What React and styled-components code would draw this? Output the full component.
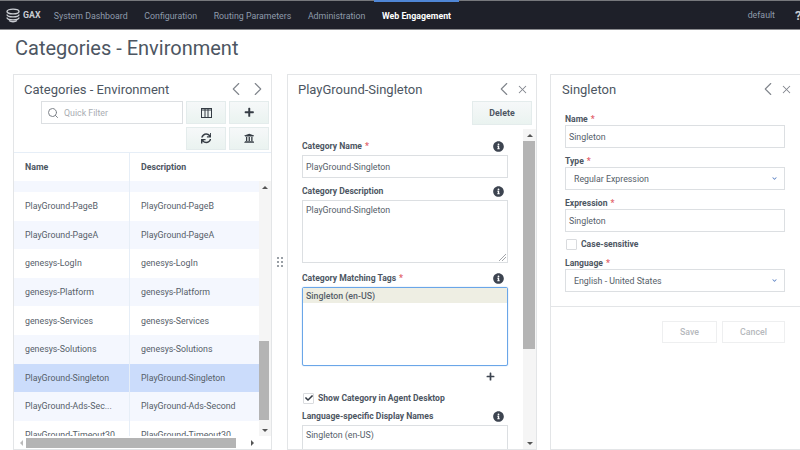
import React from 'react';
import styled, { createGlobalStyle } from 'styled-components';
import { ChevronLeft, ChevronRight, X, Search } from 'lucide-react';
import { FaPlus, FaSync, FaUniversity, FaInfoCircle, FaCheck, FaChevronDown } from 'react-icons/fa';

const GlobalStyle = createGlobalStyle`
  html, body { margin: 0; padding: 0; background: #fff; }
  body { font-family: Roboto, "Liberation Sans", sans-serif; color: #4d5662; overflow: hidden; }
  * { box-sizing: border-box; }
`;

const Page = styled.div`
  width: 800px;
  height: 450px;
  display: flex;
  flex-direction: column;
  overflow: hidden;
`;

const Nav = styled.nav`
  height: 30px;
  flex: none;
  display: flex;
  align-items: stretch;
  background: #1e2029;
  border-top: 1px solid #77787c;
  border-bottom: 1px solid #8a8b8e;
  font-size: 8.8px;
`;

const Brand = styled.div`
  display: flex;
  align-items: center;
  width: 45.5px;
  padding-left: 5px;
  gap: 2px;
  color: #c9ccd2;
  font-weight: 700;
`;

const NavItem = styled.div`
  display: flex;
  align-items: center;
  margin-top: -1px;
  padding: 0 8.3px;
  color: ${(p) => (p.$active ? '#fff' : '#8e9bab')};
  font-weight: ${(p) => (p.$active ? 700 : 400)};
  border-top: 2px solid ${(p) => (p.$active ? '#4f86d6' : 'transparent')};
`;

const NavRight = styled.div`
  margin-left: auto;
  display: flex;
  align-items: center;
  color: #8e9bab;
`;

const HelpMark = styled.span`
  margin-left: 20px;
  margin-right: -3px;
  width: 8px;
  color: #c9ccd2;
  font-size: 13px;
  font-weight: 700;
`;

const PageTitle = styled.h1`
  margin: 0;
  height: 44px;
  padding: 6px 0 0 15px;
  font-size: 20px;
  line-height: 24px;
  font-weight: 400;
  color: #4d5662;
  flex: none;
`;

const Panels = styled.div`
  flex: 1;
  min-height: 0;
  display: flex;
  padding-left: 13px;
`;

const Panel = styled.section`
  width: ${(p) => p.$width}px;
  margin-right: ${(p) => p.$gap || 0}px;
  flex: none;
  display: flex;
  flex-direction: column;
  height: 376px;
  border: 1px solid #e3e5e7;
  overflow: hidden;
`;

const Grip = styled.div`
  width: 15px;
  flex: none;
  display: grid;
  grid-template-columns: 2px 2px;
  gap: 2px;
  align-content: center;
  justify-content: center;
  i {
    width: 2px;
    height: 2px;
    background: #9aa0a6;
  }
`;

const PanelHead = styled.div`
  height: 26px;
  flex: none;
  display: flex;
  align-items: center;
  padding: 2px 0 0 ${(p) => p.$left}px;
  font-size: 13px;
  color: #4d5662;
`;

const HeadIcons = styled.div`
  margin-left: auto;
  display: flex;
  align-items: center;
  gap: ${(p) => p.$gap}px;
  margin-right: ${(p) => p.$right}px;
  color: #80858c;
`;

const Toolbar = styled.div`
  display: grid;
  grid-template-columns: 142px 40px 40px;
  grid-auto-rows: 23px;
  gap: 3px;
  padding-left: 27px;
  height: 51px;
  flex: none;
`;

const FilterBox = styled.div`
  display: flex;
  align-items: center;
  gap: 5px;
  padding-left: 5px;
  border: 1px solid #dcdfe2;
  font-size: 8.8px;
  color: #a9adb2;
  svg { color: #7d8289; }
`;

const ToolButton = styled.button`
  grid-column: ${(p) => p.$col || 'auto'};
  display: flex;
  align-items: center;
  justify-content: center;
  padding: 0;
  border: 1px solid #e4ecec;
  background: linear-gradient(#f6f8f9, #eaf3f0);
  color: #353c44;
  font-size: 10.5px;
`;

const TableWrap = styled.div`
  flex: 1;
  min-height: 0;
  display: flex;
  flex-direction: column;
`;

const HeaderRow = styled.div`
  height: 29px;
  flex: none;
  display: grid;
  grid-template-columns: 115px 1fr;
  border-top: 1px solid #e6eef7;
  font-size: 8.8px;
  font-weight: 700;
  color: #4d5662;
  background: #fff;
`;

const HeaderCell = styled.div`
  display: flex;
  align-items: center;
  padding: 0 0 1px 11px;
  & + & { border-left: 1px solid #e6eef7; }
`;

const TableMiddle = styled.div`
  flex: 1;
  min-height: 0;
  display: flex;
`;

const Rows = styled.div`
  flex: 1;
  min-width: 0;
  overflow: hidden;
`;

const Row = styled.div`
  height: ${(p) => p.$height || 28.6}px;
  display: grid;
  grid-template-columns: 115px 1fr;
  font-size: 8.8px;
  color: #565e69;
  background: ${(p) => (p.$selected ? '#cbdcfb' : p.$alt ? '#f4f7fe' : '#fff')};
`;

const Cell = styled.div`
  display: flex;
  align-items: center;
  padding-left: 11px;
  white-space: nowrap;
  & + & { border-left: 1px solid #e6eef7; }
`;

const VScroll = styled.div`
  width: ${(p) => p.$width}px;
  flex: none;
  display: flex;
  flex-direction: column;
  background: #f5f5f5;
`;

const ArrowBox = styled.div`
  height: 12px;
  flex: none;
  display: flex;
  align-items: center;
  justify-content: center;
  &::after {
    content: '';
    border-left: 3px solid transparent;
    border-right: 3px solid transparent;
    ${(p) => (p.$down ? 'border-top: 3px solid #555;' : 'border-bottom: 3px solid #555;')}
  }
`;

const VTrack = styled.div`
  flex: 1;
  min-height: 0;
  display: flex;
  flex-direction: column;
`;

const VThumb = styled.div`
  height: ${(p) => p.$height}px;
  margin-top: ${(p) => p.$top}px;
  margin-right: ${(p) => p.$inset || 0}px;
  background: #b4b4b4;
  flex: none;
`;

const HScroll = styled.div`
  height: 13px;
  flex: none;
  display: flex;
  align-items: center;
  background: #fff;
  padding: 0 2px;
  margin-right: 12px;
`;

const HArrow = styled.div`
  width: 10px;
  flex: none;
  display: flex;
  justify-content: center;
  margin-left: ${(p) => (p.$right ? 'auto' : '0')};
  &::after {
    content: '';
    border-top: 3px solid transparent;
    border-bottom: 3px solid transparent;
    ${(p) => (p.$right ? 'border-left: 3px solid #555;' : 'border-right: 3px solid #bbb;')}
  }
`;

const HThumb = styled.div`
  width: 210px;
  height: 10px;
  background: #b4b4b4;
`;

const ActionBar = styled.div`
  height: 28px;
  flex: none;
  display: flex;
  justify-content: flex-end;
  padding-right: 4px;
`;

const DeleteButton = styled.button`
  width: 60px;
  height: 24px;
  padding: 0;
  border: 1px solid #e4ecec;
  background: linear-gradient(#f6f8f9, #eaf3f0);
  font: 700 8.8px Roboto, sans-serif;
  color: #4d5662;
`;

const ScrollBody = styled.div`
  flex: 1;
  min-height: 0;
  display: flex;
`;

const FormColumn = styled.div`
  flex: 1;
  min-width: 0;
  overflow: hidden;
  padding: 9px 15px 0 14px;
`;

const LabelRow = styled.div`
  height: 16px;
  margin-top: ${(p) => p.$top || 0}px;
  margin-bottom: 1px;
  display: flex;
  align-items: center;
  justify-content: space-between;
  font-size: 8.6px;
  font-weight: 700;
  color: #4d5662;
  svg { color: #3d4450; font-size: 11px; margin-right: 4px; }
`;

const Required = styled.span`
  color: #e2626b;
  margin-left: 3px;
`;

const TextBox = styled.div`
  height: ${(p) => p.$height || 23}px;
  flex: none;
  border: 1px solid #dcdfe2;
  display: flex;
  align-items: ${(p) => (p.$multi ? 'flex-start' : 'center')};
  padding: ${(p) => (p.$multi ? '4px' : '1px')} 3px 0;
  font-size: 8.8px;
  color: #565e69;
  position: relative;
`;

const Resize = styled.svg`
  position: absolute;
  right: 1px;
  bottom: 1px;
`;

const TagList = styled.div`
  height: 79px;
  margin-top: 1px;
  border: 1px solid #6aa6e8;
  border-radius: 2px;
  box-shadow: 0 0 1px #6aa6e8;
  font-size: 8.8px;
  color: #565e69;
`;

const TagItem = styled.div`
  height: 15px;
  display: flex;
  align-items: center;
  padding: 1px 0 0 3px;
  font-weight: 500;
  background: #eeeee3;
`;

const AddRow = styled.div`
  height: 20px;
  display: flex;
  align-items: center;
  justify-content: flex-end;
  padding-right: 13px;
  font-size: 9px;
  color: #3d4450;
`;

const CheckRow = styled.div`
  height: ${(p) => p.$height}px;
  margin-top: ${(p) => p.$top || 0}px;
  display: flex;
  align-items: center;
  gap: 4px;
  padding-left: 1px;
  font-size: 8.6px;
  font-weight: 700;
  color: #4d5662;
`;

const CheckBox = styled.span`
  width: 11px;
  height: 11px;
  flex: none;
  display: flex;
  align-items: center;
  justify-content: center;
  border: 1px solid #d9dbde;
  border-radius: 1px;
  color: #333a44;
  font-size: 8px;
`;

const DetailForm = styled.div`
  padding: 10px 15px 0 14px;
  flex: none;
  border-bottom: 1px solid #e3e5e7;
  height: 206px;
`;

const SmallLabel = styled.div`
  height: ${(p) => p.$height || 19}px;
  display: flex;
  align-items: flex-end;
  line-height: 12px;
  font-size: 8.6px;
  font-weight: 700;
  color: #4d5662;
`;

const SelectBox = styled.div`
  height: 23px;
  border: 1px solid #dcdfe2;
  display: flex;
  align-items: center;
  justify-content: space-between;
  padding: 0 7px 0 8px;
  font-size: 8.8px;
  color: #565e69;
  svg { color: #5b82c4; font-size: 5px; }
`;

const DetailActions = styled.div`
  display: flex;
  justify-content: flex-end;
  gap: 5px;
  padding: 14px 15px 0 0;
`;

const GhostButton = styled.button`
  width: ${(p) => p.$width}px;
  height: 22px;
  padding: 0;
  background: #fff;
  border: 1px solid #eeeff0;
  font: 500 8.8px Roboto, sans-serif;
  color: #b5b8bc;
`;

const Logo = () => (
  <svg width="16" height="15" viewBox="0 0 16 15" fill="none" stroke="#c9ccd2" strokeWidth="1.4">
    <ellipse cx="8" cy="3.5" rx="6" ry="2.4" />
    <path d="M2 6.500c0 1.400 2.700 2.400 6 2.400s6-1 6-2.400" />
    <path d="M2 9.500c0 1.400 2.700 2.400 6 2.400s6-1 6-2.400" />
    <path d="M4 12.500c1 .8 2.500 1.200 4 1.200s3-.4 4-1.200" />
  </svg>
);

const ColumnsIcon = () => (
  <svg width="11" height="10" viewBox="0 0 11 10" fill="none" stroke="#353c44" strokeWidth="1">
    <rect x="0.5" y="0.5" width="10" height="9" />
    <path d="M4 .5v9M7 .5v9M.5 2h10" />
  </svg>
);

const rowData = [
  ['PlayGround-PageB', 'PlayGround-PageB'],
  ['PlayGround-PageA', 'PlayGround-PageA'],
  ['genesys-LogIn', 'genesys-LogIn'],
  ['genesys-Platform', 'genesys-Platform'],
  ['genesys-Services', 'genesys-Services'],
  ['genesys-Solutions', 'genesys-Solutions'],
  ['PlayGround-Singleton', 'PlayGround-Singleton'],
  ['PlayGround-Ads-Sec...', 'PlayGround-Ads-Second'],
  ['PlayGround-Timeout30', 'PlayGround-Timeout30'],
];

export default function App() {
  return (
    <Page>
      <GlobalStyle />
      <Nav>
        <Brand><Logo />GAX</Brand>
        <NavItem>System Dashboard</NavItem>
        <NavItem>Configuration</NavItem>
        <NavItem>Routing Parameters</NavItem>
        <NavItem>Administration</NavItem>
        <NavItem $active>Web Engagement</NavItem>
        <NavRight>
          default
          <HelpMark>?</HelpMark>
        </NavRight>
      </Nav>
      <PageTitle>Categories - Environment</PageTitle>
      <Panels>
        <Panel $width={259}>
          <PanelHead $left={10}>
            Categories - Environment
            <HeadIcons $gap={-2} $right={2}>
              <ChevronLeft size={22} strokeWidth={1.2} />
              <ChevronRight size={22} strokeWidth={1.2} />
            </HeadIcons>
          </PanelHead>
          <Toolbar>
            <FilterBox><Search size={12} />Quick Filter</FilterBox>
            <ToolButton><ColumnsIcon /></ToolButton>
            <ToolButton><FaPlus /></ToolButton>
            <ToolButton $col="2"><FaSync /></ToolButton>
            <ToolButton><FaUniversity /></ToolButton>
          </Toolbar>
          <TableWrap>
            <HeaderRow>
              <HeaderCell>Name</HeaderCell>
              <HeaderCell>Description</HeaderCell>
            </HeaderRow>
            <TableMiddle>
              <Rows>
                <Row $height={11} $alt><Cell /><Cell /></Row>
                {rowData.map((r, i) => (
                  <Row key={r[0]} $alt={i % 2 === 1} $selected={r[0] === 'PlayGround-Singleton'}>
                    <Cell>{r[0]}</Cell>
                    <Cell>{r[1]}</Cell>
                  </Row>
                ))}
              </Rows>
              <VScroll $width={12}>
                <ArrowBox />
                <VTrack><VThumb $height={79} $top={148} $inset={2} /></VTrack>
                <ArrowBox $down />
              </VScroll>
            </TableMiddle>
            <HScroll>
              <HArrow />
              <HThumb />
              <HArrow $right />
            </HScroll>
          </TableWrap>
        </Panel>
        <Grip>
          <i /><i /><i /><i /><i /><i />
        </Grip>
        <Panel $width={250} $gap={13}>
          <PanelHead $left={10}>
            PlayGround-Singleton
            <HeadIcons $gap={1} $right={7}>
              <ChevronLeft size={22} strokeWidth={1.2} />
              <X size={13} strokeWidth={1.9} />
            </HeadIcons>
          </PanelHead>
          <ActionBar><DeleteButton>Delete</DeleteButton></ActionBar>
          <ScrollBody>
            <FormColumn>
              <LabelRow>
                <span>Category Name<Required>*</Required></span>
                <FaInfoCircle />
              </LabelRow>
              <TextBox>PlayGround-Singleton</TextBox>
              <LabelRow $top={5}>
                <span>Category Description</span>
                <FaInfoCircle />
              </LabelRow>
              <TextBox $multi $height={63}>
                PlayGround-Singleton
                <Resize width="7" height="7" viewBox="0 0 7 7" stroke="#8b8f94" strokeWidth="0.8">
                  <path d="M0 7L7 0M3 7l4-4" />
                </Resize>
              </TextBox>
              <LabelRow $top={7}>
                <span>Category Matching Tags<Required>*</Required></span>
                <FaInfoCircle />
              </LabelRow>
              <TagList><TagItem>Singleton (en-US)</TagItem></TagList>
              <AddRow><FaPlus /></AddRow>
              <CheckRow $height={22} $top={1}><CheckBox><FaCheck /></CheckBox>Show Category in Agent Desktop</CheckRow>
              <LabelRow $top={-1}>
                <span>Language-specific Display Names</span>
                <FaInfoCircle />
              </LabelRow>
              <TextBox $multi $height={40}>Singleton (en-US)</TextBox>
            </FormColumn>
            <VScroll $width={13}>
              <ArrowBox />
              <VTrack><VThumb $height={208} $top={0} $inset={1} /></VTrack>
              <ArrowBox $down />
            </VScroll>
          </ScrollBody>
        </Panel>
        <Panel $width={251}>
          <PanelHead $left={11}>
            Singleton
            <HeadIcons $gap={1} $right={7}>
              <ChevronLeft size={22} strokeWidth={1.2} />
              <X size={13} strokeWidth={1.9} />
            </HeadIcons>
          </PanelHead>
          <DetailForm>
            <SmallLabel $height={14}>Name<Required>*</Required></SmallLabel>
            <TextBox>Singleton</TextBox>
            <SmallLabel>Type<Required>*</Required></SmallLabel>
            <SelectBox>Regular Expression<FaChevronDown /></SelectBox>
            <SmallLabel>Expression<Required>*</Required></SmallLabel>
            <TextBox>Singleton</TextBox>
            <CheckRow $height={24}><CheckBox />Case-sensitive</CheckRow>
            <SmallLabel $height={13}>Language<Required>*</Required></SmallLabel>
            <SelectBox>English - United States<FaChevronDown /></SelectBox>
          </DetailForm>
          <DetailActions>
            <GhostButton $width={55}>Save</GhostButton>
            <GhostButton $width={63}>Cancel</GhostButton>
          </DetailActions>
        </Panel>
      </Panels>
    </Page>
  );
}
